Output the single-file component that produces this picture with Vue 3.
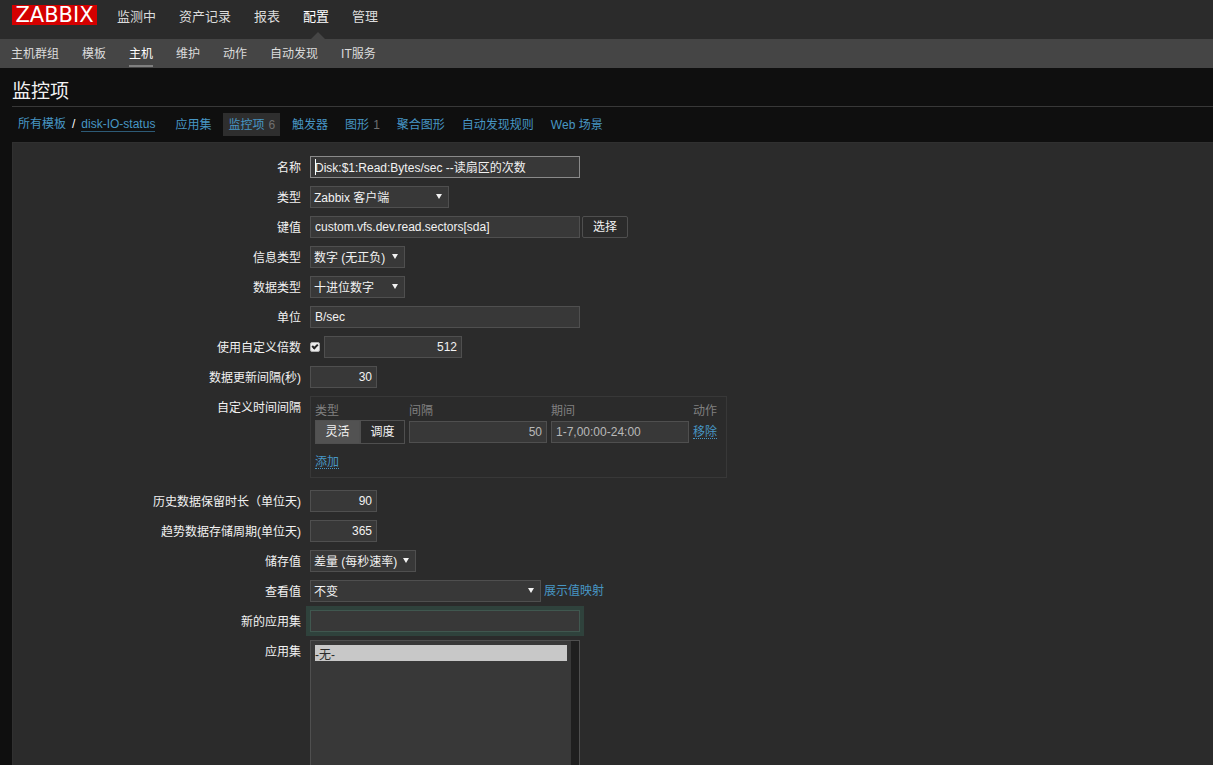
<script setup>
import { ref } from 'vue'

const sections = ['监测中', '资产记录', '报表', '配置', '管理']
const pages = ['主机群组', '模板', '主机', '维护', '动作', '自动发现', 'IT服务']
const tabs = [
  { label: '应用集' },
  { label: '监控项', count: 6, active: true },
  { label: '触发器' },
  { label: '图形', count: 1 },
  { label: '聚合图形' },
  { label: '自动发现规则' },
  { label: 'Web 场景' },
]

const name = ref('Disk:$1:Read:Bytes/sec --读扇区的次数')
const key = ref('custom.vfs.dev.read.sectors[sda]')
const units = ref('B/sec')
const useMultiplier = ref(true)
const multiplier = ref('512')
const delay = ref('30')
const flexDelay = ref('50')
const flexPeriod = ref('1-7,00:00-24:00')
const intervalType = ref('灵活')
const history = ref('90')
const trends = ref('365')
const newApplication = ref('')
const applications = ref(['0'])
</script>

<template>
  <div class="page">
    <header class="top">
      <a href="#" class="logo">ZABBIX</a>
      <nav class="sections">
        <a v-for="s in sections" :key="s" href="#" :class="{ current: s === '配置' }">{{ s }}</a>
      </nav>
    </header>
    <nav class="subnav">
      <a v-for="p in pages" :key="p" href="#" :class="{ current: p === '主机' }">{{ p }}</a>
    </nav>

    <main>
      <h1>监控项</h1>
      <nav class="tabs">
        <div class="crumbs">
          <a href="#">所有模板</a><span>/</span><a href="#" class="template">disk-IO-status</a>
        </div>
        <a v-for="t in tabs" :key="t.label" href="#" class="tab" :class="{ active: t.active }">{{ t.label }}<span v-if="t.count" class="count">{{ t.count }}</span></a>
      </nav>

      <form class="panel" @submit.prevent>
        <div class="row">
          <label for="name">名称</label>
          <div class="field focused"><input id="name" v-model="name" class="wide" type="text"><i class="caret"></i></div>
        </div>
        <div class="row">
          <label for="type">类型</label>
          <div class="field"><span class="select w-type"><select id="type"><option>Zabbix 客户端</option></select></span></div>
        </div>
        <div class="row">
          <label for="key">键值</label>
          <div class="field"><input id="key" v-model="key" class="wide" type="text"><button type="button" class="pick">选择</button></div>
        </div>
        <div class="row">
          <label for="value-type">信息类型</label>
          <div class="field"><span class="select w-value"><select id="value-type"><option>数字 (无正负)</option></select></span></div>
        </div>
        <div class="row">
          <label for="data-type">数据类型</label>
          <div class="field"><span class="select w-value"><select id="data-type"><option>十进位数字</option></select></span></div>
        </div>
        <div class="row">
          <label for="units">单位</label>
          <div class="field"><input id="units" v-model="units" class="wide" type="text"></div>
        </div>
        <div class="row">
          <label for="multiplier">使用自定义倍数</label>
          <div class="field multiplier">
            <input v-model="useMultiplier" type="checkbox" aria-label="使用自定义倍数">
            <input id="multiplier" v-model="multiplier" class="medium num" type="text">
          </div>
        </div>
        <div class="row">
          <label for="delay">数据更新间隔(秒)</label>
          <div class="field"><input id="delay" v-model="delay" class="small num" type="text"></div>
        </div>
        <div class="row intervals-row">
          <span class="label">自定义时间间隔</span>
          <div class="intervals">
            <table>
              <thead>
                <tr><th>类型</th><th>间隔</th><th>期间</th><th>动作</th></tr>
              </thead>
              <tbody>
                <tr>
                  <td>
                    <div class="segments">
                      <button v-for="t in ['灵活', '调度']" :key="t" type="button" :class="{ on: intervalType === t }" @click="intervalType = t">{{ t }}</button>
                    </div>
                  </td>
                  <td><input v-model="flexDelay" class="medium num dim" type="text" aria-label="间隔"></td>
                  <td><input v-model="flexPeriod" class="medium dim" type="text" aria-label="期间"></td>
                  <td><a href="#" class="action">移除</a></td>
                </tr>
              </tbody>
            </table>
            <a href="#" class="action">添加</a>
          </div>
        </div>
        <div class="row">
          <label for="history">历史数据保留时长（单位天)</label>
          <div class="field"><input id="history" v-model="history" class="small num" type="text"></div>
        </div>
        <div class="row">
          <label for="trends">趋势数据存储周期(单位天)</label>
          <div class="field"><input id="trends" v-model="trends" class="small num" type="text"></div>
        </div>
        <div class="row">
          <label for="delta">储存值</label>
          <div class="field"><span class="select w-delta"><select id="delta"><option>差量 (每秒速率)</option></select></span></div>
        </div>
        <div class="row">
          <label for="valuemap">查看值</label>
          <div class="field"><span class="select w-map"><select id="valuemap"><option>不变</option></select></span><a href="#" class="maplink">展示值映射</a></div>
        </div>
        <div class="row">
          <label for="new-app">新的应用集</label>
          <div class="field"><input id="new-app" v-model="newApplication" class="wide fresh" type="text"></div>
        </div>
        <div class="row list-row">
          <label for="apps">应用集</label>
          <div class="listbox">
            <select id="apps" v-model="applications" multiple><option value="0">-无-</option></select>
          </div>
        </div>
      </form>
    </main>
  </div>
</template>

<style>
html {
  background: #0f0f0f;
  scrollbar-width: none;
}
</style>

<style scoped>
.page {
  display: flex;
  flex-direction: column;
  min-height: 100vh;
  color: #f2f2f2;
  background: #0f0f0f;
  font: 12px/16px "Liberation Sans", "Noto Sans CJK SC", sans-serif;
}
.page *, .page *::after { box-sizing: border-box; }
a { color: #4796c4; text-decoration: none; }

.top {
  display: flex;
  height: 39px;
  padding-left: 12px;
  background: #2b2b2b;
}
.logo {
  width: 85px;
  height: 20px;
  margin-top: 5px;
  background: #d40000;
  color: #fff;
  font: 21px/20px "DejaVu Sans", sans-serif;
  text-align: center;
}
.sections {
  display: flex;
  gap: 23px;
  margin-left: 20px;
  font-size: 13px;
  line-height: 34px;
}
.sections a { position: relative; color: #dcdcdc; }
.sections .current { color: #fff; }
.sections .current::after {
  content: "";
  position: absolute;
  left: 8px;
  bottom: 0;
  border: 7px solid transparent;
  border-top-width: 0;
  border-bottom-color: #454545;
}

.subnav {
  display: flex;
  gap: 23px;
  height: 29px;
  padding: 0 11px;
  background: #454545;
  line-height: 30px;
}
.subnav a { color: #dcdcdc; height: 28px; }
.subnav .current { color: #fff; border-bottom: 2px solid #808080; }

main {
  display: flex;
  flex: 1;
  flex-direction: column;
  padding-left: 12px;
}
h1 {
  margin: 0;
  height: 39px;
  border-bottom: 1px solid #383838;
  color: #f2f2f2;
  font-size: 19px;
  font-weight: 400;
  line-height: 48px;
}
.tabs {
  display: flex;
  gap: 7px;
  height: 23px;
  margin: 6px 0;
  line-height: 25px;
}
.crumbs {
  display: flex;
  gap: 6px;
  padding: 0 8px 0 6px;
  align-items: center;
}
.crumbs span { color: #fff; }
.template { line-height: 14px; border-bottom: 1px solid #2d5a76; }
.tab { padding: 0 5px; white-space: pre; }
.tab.active { background: #2e2e2e; }
.count { margin-left: 4px; color: #707070; }

.panel {
  display: flex;
  flex: 1;
  flex-direction: column;
  gap: 8px;
  padding-top: 13px;
  border: 1px solid #303030;
  border-width: 1px 0 0 1px;
  background: #2b2b2b;
}
.row {
  display: grid;
  grid-template-columns: 288px 1fr;
  column-gap: 9px;
}
.row > label, .label {
  height: 22px;
  line-height: 24px;
  text-align: right;
}
.field { display: flex; align-items: center; }

input, select, button {
  margin: 0;
  color: #f2f2f2;
  font: inherit;
  outline: none;
}
input[type="text"] {
  height: 22px;
  padding: 0 4px 1px;
  border: 1px solid #4f4f4f;
  background: #383838;
}
.field .wide { width: 270px; }
.medium { width: 138px; }
.small { width: 67px; }
input.num { text-align: right; }
input.dim { color: #b8b8b8; }

.focused { position: relative; }
.focused input[type="text"] { border-color: #8a8a8a; }
.caret {
  position: absolute;
  left: 5px;
  top: 3px;
  width: 1px;
  height: 16px;
  background: #fff;
}

.select { position: relative; display: block; }
.select select {
  display: block;
  appearance: none;
  width: 100%;
  height: 22px;
  padding: 2px 3px 0;
  border: 1px solid #4f4f4f;
  border-radius: 0;
  background: #383838;
}
.select::after {
  content: "";
  position: absolute;
  right: 7px;
  top: 8px;
  border: 3px solid transparent;
  border-top: 5px solid #f2f2f2;
  border-bottom-width: 0;
  pointer-events: none;
}
.w-type { width: 139px; }
.w-value { width: 95px; }
.w-delta { width: 106px; }
.w-map { width: 231px; }
.maplink { margin-left: 3px; }

.pick {
  width: 46px;
  height: 22px;
  margin-left: 2px;
  padding: 0;
  border: 1px solid #4f4f4f;
  border-radius: 2px;
  background: #2b2b2b;
}
.multiplier { gap: 4px; }
input[type="checkbox"] {
  position: relative;
  appearance: none;
  width: 10px;
  height: 10px;
  border: 1px solid #b0b0b0;
  border-radius: 2px;
  background: #ececec;
}
input[type="checkbox"]:checked::after {
  content: "";
  position: absolute;
  left: 2px;
  top: 0;
  width: 4px;
  height: 6px;
  border: solid #222;
  border-width: 0 2px 2px 0;
  transform: rotate(45deg);
}

.intervals-row { margin-bottom: 4px; }
.intervals {
  justify-self: start;
  padding: 5px 9px 7px 4px;
  border: 1px solid #383838;
}
table { border-collapse: collapse; }
th, td { padding: 0 4px 0 0; text-align: left; }
th { height: 18px; padding-bottom: 0; color: #808080; font-weight: 400; }
td { height: 24px; }
th:last-child, td:last-child { padding-right: 0; }
td input { display: block; }
.segments { display: flex; width: 90px; height: 24px; }
.segments button {
  flex: 1;
  padding: 0;
  border: 1px solid #4f4f4f;
  background: #2b2b2b;
}
.segments .on { background: #525252; }
.action {
  display: inline-block;
  height: 15px;
  line-height: 16px;
  border-bottom: 1px dotted #4796c4;
}
.intervals > .action { margin-top: 10px; }

input.fresh {
  border-color: #40574f;
  box-shadow: 0 0 0 4px #2f423c;
}
.list-row { flex: 1; grid-template-rows: minmax(126px, 1fr); }
.listbox {
  display: flex;
  width: 270px;
  padding-right: 8px;
  border: 1px solid #4f4f4f;
  border-bottom: 0;
  background: #1f1f1f;
}
.listbox select {
  flex: 1;
  height: 100%;
  padding: 4px;
  border: 0;
  border-radius: 0;
  background: #383838;
  scrollbar-width: none;
}
.listbox option {
  height: 16px;
  min-height: 16px;
  padding: 0;
  color: #2b2b2b;
  line-height: 15px;
}
.listbox option:checked { background: #c8c8c8 linear-gradient(#c8c8c8, #c8c8c8); }
</style>
